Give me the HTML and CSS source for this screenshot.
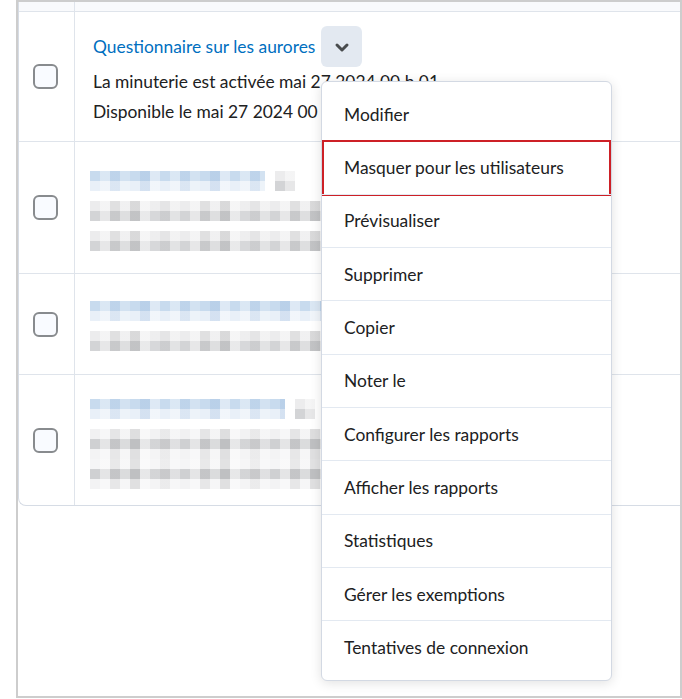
FILE: index.html
```html
<!DOCTYPE html>
<html lang="fr">
<head>
<meta charset="utf-8">
<title>Questionnaires</title>
<link rel="stylesheet" href="styles.css">
</head>
<body>
<div class="frame">
  <div class="table">
    <div class="row head">
      <div class="sel"></div>
      <div class="main"></div>
    </div>
    <div class="row r1">
      <div class="sel"><span class="check"></span></div>
      <div class="main">
        <div class="title-line">
          <a class="title" href="#">Questionnaire sur les aurores</a>
          <span class="drop-btn">
            <svg width="18" height="18" viewBox="0 0 18 18"><path d="M4 7 L9 12 L14 7" fill="none" stroke="#494c4e" stroke-width="3" stroke-linecap="round" stroke-linejoin="round"/></svg>
          </span>
        </div>
        <div class="info">La minuterie est activée mai 27 2024 00 h 01</div>
        <div class="info">Disponible le mai 27 2024 00 h 00</div>
      </div>
    </div>
    <div class="row r2">
      <div class="sel"><span class="check"></span></div>
      <div class="main">
        <div class="blur-row"><span class="blur blue w175"></span><span class="blur gray w20"></span></div>
        <div class="blur-row"><span class="blur gray w240"></span></div>
        <div class="blur-row"><span class="blur gray w240"></span></div>
      </div>
    </div>
    <div class="row r3">
      <div class="sel"><span class="check"></span></div>
      <div class="main">
        <div class="blur-row"><span class="blur blue w240"></span></div>
        <div class="blur-row"><span class="blur gray w240"></span></div>
      </div>
    </div>
    <div class="row r4">
      <div class="sel"><span class="check"></span></div>
      <div class="main">
        <div class="blur-row"><span class="blur blue w195"></span><span class="blur gray w20"></span></div>
        <div class="blur-row"><span class="blur gray tall w240"></span></div>
      </div>
    </div>
  </div>

  <ul class="menu">
    <li>Modifier</li>
    <li class="focused">Masquer pour les utilisateurs</li>
    <li>Prévisualiser</li>
    <li>Supprimer</li>
    <li>Copier</li>
    <li>Noter le</li>
    <li>Configurer les rapports</li>
    <li>Afficher les rapports</li>
    <li>Statistiques</li>
    <li>Gérer les exemptions</li>
    <li>Tentatives de connexion</li>
  </ul>
</div>
</body>
</html>
```

FILE: styles.css
```css
* { box-sizing: border-box; }

html, body {
  margin: 0;
  padding: 0;
  background: #ffffff;
}

body {
  font-family: Lato, "Open Sans", Arial, sans-serif;
  font-size: 17.4px;
  color: #202122;
}

.frame {
  position: relative;
  margin-left: 16px;
  width: 666px;
  height: 698px;
  border: 2px solid #cdcdcd;
  background: #ffffff;
}

.table {
  border-left: 1px solid #d6dce5;
  border-bottom: 1px solid #d6dce5;
  border-bottom-left-radius: 8px;
}

.row {
  display: flex;
  border-bottom: 1px solid #dfe4eb;
}

.row:last-child { border-bottom: none; }

.sel {
  width: 56px;
  flex: none;
  border-right: 1px solid #dfe4eb;
  display: flex;
  align-items: center;
  padding-left: 14px;
}

.main {
  flex: 1;
  padding-left: 18px;
}

.head { height: 10px; background: #f9fafc; }

.check {
  display: block;
  width: 25px;
  height: 25px;
  border: 2px solid #888b8e;
  border-radius: 6px;
  background: #f9fbff;
}

.r1 .main { padding-top: 14px; padding-bottom: 14px; }
.r2 .main { padding-top: 29px; padding-bottom: 22px; }
.r3 .main { padding-top: 27px; padding-bottom: 23px; }
.r4 .main { padding-top: 24px; padding-bottom: 16px; }

.title-line {
  display: flex;
  align-items: center;
  gap: 6px;
  height: 41px;
}

.title {
  color: #006fbf;
  text-decoration: none;
  margin-top: -1px;
}

.drop-btn {
  width: 41px;
  height: 41px;
  border-radius: 6px;
  background: #e3e9f1;
  display: flex;
  align-items: center;
  justify-content: center;
}

.drop-btn svg { display: block; }

.info {
  line-height: 30px;
  white-space: nowrap;
}

.blur-row {
  display: flex;
  gap: 10px;
  margin-left: -3px;
  margin-bottom: 10px;
}

.blur-row:last-child { margin-bottom: 0; }

.blur {
  display: block;
  height: 20px;
}

.blur.tall { height: 60px; }

.w20 { width: 20px; }
.w175 { width: 175px; }
.w195 { width: 195px; }
.w240 { width: 240px; }

.blur.blue {
  background:
    repeating-linear-gradient(90deg,
      rgba(255,255,255,0) 0 10px, rgba(255,255,255,0.35) 10px 20px,
      rgba(120,160,210,0.12) 20px 30px, rgba(255,255,255,0.2) 30px 40px,
      rgba(255,255,255,0) 40px 50px, rgba(120,160,210,0.18) 50px 60px,
      rgba(255,255,255,0.4) 60px 70px),
    linear-gradient(180deg, #c8dbee 0 10px, #e9f0f8 10px 20px);
}

.blur.gray {
  background:
    repeating-linear-gradient(90deg,
      rgba(255,255,255,0) 0 10px, rgba(255,255,255,0.45) 10px 20px,
      rgba(0,0,0,0.05) 20px 30px, rgba(255,255,255,0.25) 30px 40px,
      rgba(0,0,0,0.08) 40px 50px, rgba(255,255,255,0.5) 50px 60px,
      rgba(255,255,255,0.1) 60px 70px, rgba(0,0,0,0.03) 70px 80px,
      rgba(255,255,255,0.35) 80px 90px),
    linear-gradient(180deg, #ececed 0 10px, #d3d4d6 10px 20px);
}

.blur.gray.tall {
  background:
    repeating-linear-gradient(90deg,
      rgba(255,255,255,0) 0 10px, rgba(255,255,255,0.45) 10px 20px,
      rgba(0,0,0,0.05) 20px 30px, rgba(255,255,255,0.25) 30px 40px,
      rgba(0,0,0,0.08) 40px 50px, rgba(255,255,255,0.5) 50px 60px,
      rgba(255,255,255,0.1) 60px 70px, rgba(0,0,0,0.03) 70px 80px,
      rgba(255,255,255,0.35) 80px 90px),
    linear-gradient(180deg, #f1f1f2 0 10px, #cfd0d2 10px 20px, #f3f3f4 20px 30px, #f5f5f6 30px 40px, #cfd0d2 40px 50px, #f3f3f4 50px 60px);
}

.menu {
  position: absolute;
  left: 303px;
  top: 79px;
  width: 291px;
  margin: 0;
  padding: 6px 0;
  list-style: none;
  background: #ffffff;
  border: 1px solid #d3d9e3;
  border-radius: 6px;
  box-shadow: 0 2px 12px rgba(0, 0, 0, 0.12);
}

.menu li {
  position: relative;
  height: 53.33px;
  display: flex;
  align-items: center;
  padding-left: 22px;
  border-top: 1px solid #e3e9f1;
  color: #202122;
}

.menu li:first-child { border-top: none; height: 52.33px; }

.menu li.focused::after {
  content: "";
  position: absolute;
  left: 0;
  right: 0;
  top: -1px;
  height: 52px;
  border: 2px solid #cd2026;
}
```
